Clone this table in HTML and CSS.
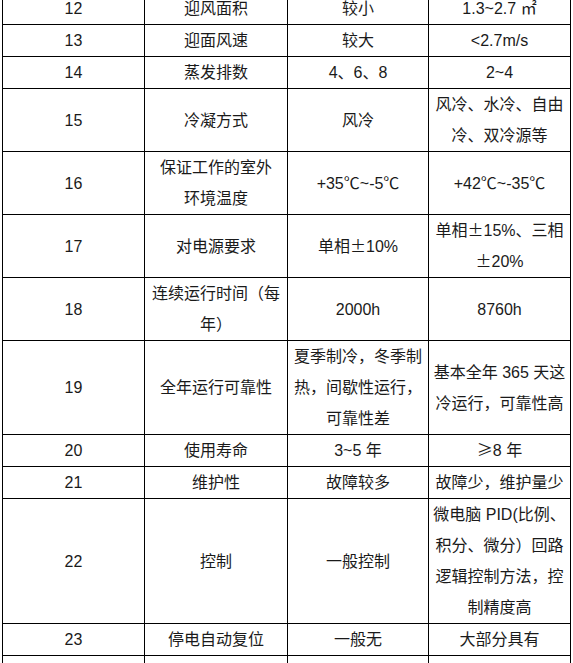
FILE: index.html
```html
<!DOCTYPE html>
<html lang="zh">
<head>
<meta charset="utf-8">
<link rel="stylesheet" href="styles.css">
</head>
<body>
<table class="spec">
  <colgroup>
    <col class="c1"><col class="c2"><col class="c3"><col class="c4">
  </colgroup>
  <tr><td>12</td><td>迎风面积</td><td>较小</td><td>1.3~2.7 ㎡</td></tr>
  <tr><td>13</td><td>迎面风速</td><td>较大</td><td>&lt;2.7m/s</td></tr>
  <tr><td>14</td><td>蒸发排数</td><td>4、6、8</td><td>2~4</td></tr>
  <tr><td>15</td><td>冷凝方式</td><td>风冷</td><td>风冷、水冷、自由<br>冷、双冷源等</td></tr>
  <tr><td>16</td><td>保证工作的室外<br>环境温度</td><td>+35<span class="cjk">℃</span>~-5<span class="cjk">℃</span></td><td>+42<span class="cjk">℃</span>~-35<span class="cjk">℃</span></td></tr>
  <tr><td>17</td><td>对电源要求</td><td>单相<span class="cjk">±</span>10%</td><td>单相<span class="cjk">±</span>15%、三相<br><span class="cjk">±</span>20%</td></tr>
  <tr><td>18</td><td>连续运行时间（每<br>年）</td><td>2000h</td><td>8760h</td></tr>
  <tr><td>19</td><td>全年运行可靠性</td><td>夏季制冷，冬季制<br>热，间歇性运行，<br>可靠性差</td><td>基本全年 365 天这<br>冷运行，可靠性高</td></tr>
  <tr><td>20</td><td>使用寿命</td><td>3~5 年</td><td><span class="cjk">≥</span>8 年</td></tr>
  <tr><td>21</td><td>维护性</td><td>故障较多</td><td>故障少，维护量少</td></tr>
  <tr><td>22</td><td>控制</td><td>一般控制</td><td>微电脑 PID(比例、<br>积分、微分）回路<br>逻辑控制方法，控<br>制精度高</td></tr>
  <tr><td>23</td><td>停电自动复位</td><td>一般无</td><td>大部分具有</td></tr>
  <tr><td>&nbsp;</td><td>&nbsp;</td><td>&nbsp;</td><td>&nbsp;</td></tr>
</table>
</body>
</html>
```
FILE: styles.css
```css
html, body {
  margin: 0;
  padding: 0;
  background: #fff;
  overflow: hidden;
}
.spec {
  margin: -8px 0 0 2px;
  border-collapse: collapse;
  table-layout: fixed;
  width: 569px;
  font-family: "Liberation Sans", "Noto Sans CJK SC", sans-serif;
  font-size: 16px;
  color: #1a1a1a;
}
.spec .c1 { width: 142px; }
.spec .c2 { width: 143px; }
.spec .c3 { width: 141px; }
.spec .c4 { width: 142px; }
.spec td {
  border: 1px solid #000;
  padding: 0 2px;
  height: 31px;
  line-height: 31px;
  text-align: center;
  vertical-align: middle;
  white-space: nowrap;
}
.cjk {
  font-family: "Noto Sans CJK SC", sans-serif;
  line-height: 0;
}
```
